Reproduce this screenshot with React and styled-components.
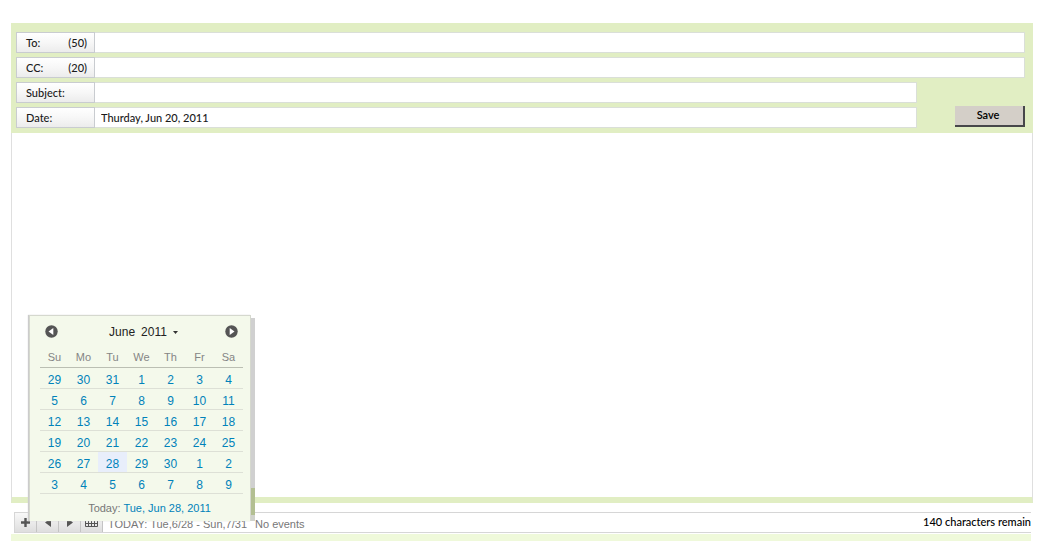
import React from "react";
import styled, { createGlobalStyle } from "styled-components";

const GlobalStyle = createGlobalStyle`
  * { box-sizing: border-box; }
  body {
    margin: 0;
    background: #fff;
    color: #1a1a1a;
    font-family: Lato, "Open Sans", sans-serif;
    font-size: 11px;
  }
  button, input, textarea { font: inherit; color: inherit; margin: 0; }
`;

const Page = styled.form`
  padding: 23px 9px 0 11px;
`;

const Header = styled.section`
  display: grid;
  gap: 4px;
  padding: 9px 8px 5px 5px;
  background: #e1eec3;
`;

const Details = styled.div`
  display: flex;
  align-items: flex-end;
  gap: 38px;
`;

const DetailFields = styled.div`
  flex: 1;
  display: grid;
  gap: 4px;
`;

const Field = styled.div`
  display: flex;
  height: 21px;
`;

const FieldLabel = styled.label`
  display: flex;
  align-items: center;
  justify-content: space-between;
  width: 79px;
  padding: 0 7px 1px 9px;
  border: 1px solid #c9ccd0;
  background: linear-gradient(#fff, #f7f7f7 50%, #ececec);
  font-weight: 500;
`;

const FieldInput = styled.input`
  flex: 1;
  min-width: 0;
  padding: 0 6px;
  border: 1px solid #dadfd8;
  border-left: 0;
  border-radius: 0;
  background: #fff;
  outline: 0;
  font-weight: 500;
`;

const SaveButton = styled.button`
  width: 70px;
  height: 21px;
  margin-bottom: 1px;
  padding: 0 2px 2px 0;
  border: 0 solid #47474a;
  border-width: 0 2px 2px 0;
  background: #d4cfc8;
  color: #000;
  font-weight: 600;
`;

const Message = styled.textarea`
  display: block;
  width: 100%;
  height: 370px;
  padding: 8px;
  resize: none;
  outline: 0;
  border: 1px solid #dfdfdf;
  border-top: 0;
  border-bottom: 6px solid #e1eec3;
  border-radius: 0;
  background: #fff;
`;

const Footer = styled.footer`
  position: relative;
  margin: 9px 2px 0 0;
  padding-bottom: 8px;
  background: linear-gradient(#fff, #fff) top / 100% 22px no-repeat, #eff9da;
`;

const Toolbar = styled.div`
  display: flex;
  align-items: center;
  height: 21px;
  margin-left: 3px;
  border: 1px solid #d6d6d6;
  border-right: 0;
`;

const ToolButton = styled.button`
  display: flex;
  align-items: center;
  justify-content: center;
  width: 22px;
  height: 19px;
  padding: 0;
  border: 0;
  border-right: 1px solid #c4c4c4;
  background: linear-gradient(#f8f8f8, #dedede);
  color: #555;
`;

const Agenda = styled.p`
  flex: 1;
  display: flex;
  gap: 8px;
  margin: 0;
  padding: 2px 0 0 5px;
  color: #777;
  font-family: "Liberation Sans", Arial, sans-serif;
`;

const Remaining = styled.output`
  padding-bottom: 3px;
  color: #000;
  font-weight: 500;
`;

const Calendar = styled.section`
  position: absolute;
  left: 18px;
  bottom: 20px;
  width: 222px;
  padding: 0 7px 0 10px;
  border: 1px solid #d5d8ce;
  border-bottom: 0;
  background: #f4f9eb;
  box-shadow: -1px 0 1px #ccc;
  font-family: "Liberation Sans", Arial, sans-serif;
  font-size: 12px;

  &::after {
    content: "";
    position: absolute;
    top: 2px;
    right: -5px;
    bottom: 0;
    width: 4px;
    background: linear-gradient(to top, #d0d2cc 6px, #b3bf92 6px 33px, #d0d0d0 33px);
  }
`;

const CalendarHead = styled.div`
  display: flex;
  align-items: center;
  justify-content: space-between;
  height: 31px;
  padding: 0 5px;
`;

const RoundButton = styled.button`
  display: flex;
  padding: 0;
  border: 0;
  background: none;
`;

const MonthButton = styled.button`
  display: flex;
  align-items: center;
  gap: 6px;
  padding: 2px 0 0 4px;
  border: 0;
  background: none;
  color: #222;
`;

const Days = styled.table`
  width: 100%;
  table-layout: fixed;
  border-collapse: collapse;
  text-align: center;
`;

const WeekDay = styled.th`
  height: 21px;
  padding: 0;
  border-bottom: 1px solid #bbbfb3;
  color: #858585;
  font-size: 11px;
  font-weight: 400;
`;

const DayCell = styled.td`
  height: 21px;
  padding: 0;
  border-bottom: 1px solid #dde0d6;
`;

const DayButton = styled.button`
  display: block;
  width: 100%;
  height: 20px;
  padding: 3px 0 0;
  border: 0;
  background: ${(p) => (p.$today ? "#e8eefb" : "none")};
  color: #0082ba;
`;

const Today = styled.p`
  margin: 0;
  padding: 8px 0 6px 16px;
  color: #777;
  font-size: 11px;
  line-height: 13px;
  text-align: center;
`;

const TodayLink = styled.a`
  color: #0082ba;
  text-decoration: none;
`;

const WEEK_DAYS = ["Su", "Mo", "Tu", "We", "Th", "Fr", "Sa"];
const WEEKS = [
  [29, 30, 31, 1, 2, 3, 4],
  [5, 6, 7, 8, 9, 10, 11],
  [12, 13, 14, 15, 16, 17, 18],
  [19, 20, 21, 22, 23, 24, 25],
  [26, 27, 28, 29, 30, 1, 2],
  [3, 4, 5, 6, 7, 8, 9],
];

function TextField({ id, label, limit, value }) {
  return (
    <Field>
      <FieldLabel htmlFor={id}>
        <span>{label}</span>
        {limit && <span>({limit})</span>}
      </FieldLabel>
      <FieldInput id={id} defaultValue={value} />
    </Field>
  );
}

function Arrow({ left }) {
  return (
    <svg width="13" height="13" viewBox="0 0 13 13" aria-hidden="true">
      <circle cx="6.5" cy="6.5" r="6.2" fill="#555" />
      <path d={left ? "M8.300 3v7L3.500 6.500z" : "M4.700 3v7l4.800-3.500z"} fill="#fff" />
    </svg>
  );
}

function DatePicker() {
  return (
    <Calendar aria-label="Calendar">
      <CalendarHead>
        <RoundButton type="button" aria-label="Previous month"><Arrow left /></RoundButton>
        <MonthButton type="button">
          <span>June</span>
          <span>2011</span>
          <svg width="5" height="3" viewBox="0 0 5 3" aria-hidden="true">
            <path d="M0 0h5L2.5 3z" fill="#333" />
          </svg>
        </MonthButton>
        <RoundButton type="button" aria-label="Next month"><Arrow /></RoundButton>
      </CalendarHead>
      <Days>
        <thead>
          <tr>{WEEK_DAYS.map((d) => <WeekDay key={d} scope="col">{d}</WeekDay>)}</tr>
        </thead>
        <tbody>
          {WEEKS.map((week, i) => (
            <tr key={i}>
              {week.map((d) => (
                <DayCell key={d}>
                  <DayButton type="button" $today={d === 28}>{d}</DayButton>
                </DayCell>
              ))}
            </tr>
          ))}
        </tbody>
      </Days>
      <Today>Today: <TodayLink href="#today">Tue, Jun 28, 2011</TodayLink></Today>
    </Calendar>
  );
}

export default function App() {
  return (
    <>
      <GlobalStyle />
      <Page onSubmit={(e) => e.preventDefault()}>
        <Header>
          <TextField id="to" label="To:" limit={50} />
          <TextField id="cc" label="CC:" limit={20} />
          <Details>
            <DetailFields>
              <TextField id="subject" label="Subject:" />
              <TextField id="date" label="Date:" value="Thurday, Jun 20, 2011" />
            </DetailFields>
            <SaveButton type="submit">Save</SaveButton>
          </Details>
        </Header>
        <Message aria-label="Message" />
        <Footer>
          <Toolbar>
            <ToolButton type="button" aria-label="Add event">
              <svg width="9" height="9" viewBox="0 0 9 9"><path d="M3.3 0h2.4v3.3H9v2.4H5.7V9H3.3V5.7H0V3.3h3.3z" fill="currentColor" /></svg>
            </ToolButton>
            <ToolButton type="button" aria-label="Previous">
              <svg width="6" height="9" viewBox="0 0 6 9"><path d="M6 0v9L0 4.5z" fill="currentColor" /></svg>
            </ToolButton>
            <ToolButton type="button" aria-label="Next">
              <svg width="6" height="9" viewBox="0 0 6 9"><path d="M0 0v9l6-4.5z" fill="currentColor" /></svg>
            </ToolButton>
            <ToolButton type="button" aria-label="Show calendar">
              <svg width="13" height="11" viewBox="0 0 13 11"><path d="M.5.5h12v9H.5zM0 3.500h13M0 6.500h13M3.500 3v6M6.500 3v6M9.500 3v6" stroke="currentColor" fill="none" /></svg>
            </ToolButton>
            <Agenda>
              <span>TODAY: Tue,6/28 - Sun,7/31</span>
              <span>No events</span>
            </Agenda>
            <Remaining>140 characters remain</Remaining>
          </Toolbar>
          <DatePicker />
        </Footer>
      </Page>
    </>
  );
}
